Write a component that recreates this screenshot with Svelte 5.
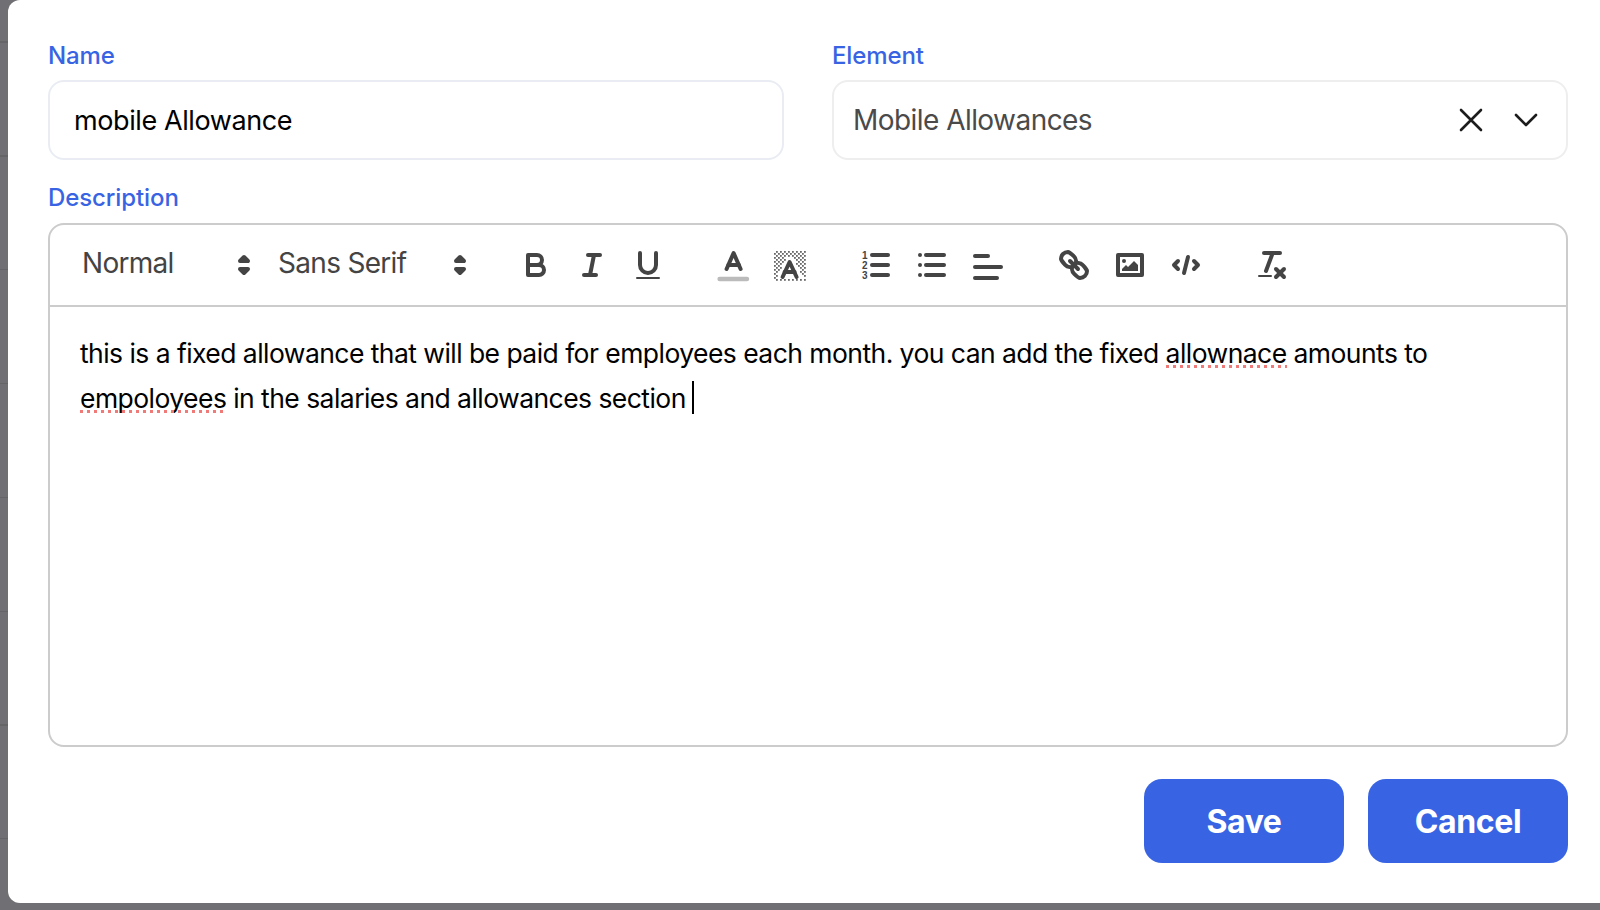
<script lang="ts">
	let name = $state("mobile Allowance");

	// checker cells of the background-colour icon, with a gap left round the A
	const checker: { x: number; y: number }[] = [];
	for (let y = 2; y < 17; y++) {
		for (let x = 1; x < 17; x++) {
			if ((x + y) % 2) continue;
			const halfWidth = (y - 5) * 0.5 + 1.6;
			if (y >= 5 && y <= 15 && Math.abs(x + 0.5 - 9) < halfWidth) continue;
			checker.push({ x, y });
		}
	}
</script>

<div class="page">
	<div class="modal">
		<div class="row">
			<div class="field">
				<label class="label" for="name">Name</label>
				<input id="name" class="input" bind:value={name} />
			</div>
			<div class="field">
				<span class="label">Element</span>
				<div class="select">
					<span class="select-value">Mobile Allowances</span>
					<svg class="clear" viewBox="0 0 24 24"><path d="M2 2l20 20M22 2L2 22" /></svg>
					<svg class="chevron" viewBox="0 0 24 14"><path d="M2 2l10 10L22 2" /></svg>
				</div>
			</div>
		</div>

		<div class="field description">
			<span class="label">Description</span>
			<div class="editor">
				<div class="toolbar">
					<span class="formats">
						<span class="picker header">
							<span class="picker-text">Normal</span>
							<svg class="icon" viewBox="0 0 18 18"><polygon points="7 11 9 13 11 11 7 11" /><polygon points="7 7 9 5 11 7 7 7" /></svg>
						</span>
						<span class="picker font">
							<span class="picker-text">Sans Serif</span>
							<svg class="icon" viewBox="0 0 18 18"><polygon points="7 11 9 13 11 11 7 11" /><polygon points="7 7 9 5 11 7 7 7" /></svg>
						</span>
					</span>
					<span class="formats">
						<button class="tool" aria-label="Bold">
							<svg class="icon" viewBox="0 0 18 18"><path d="M5 4h4.5A2.5 2.5 0 0 1 12 6.5 2.5 2.5 0 0 1 9.5 9H5V4Z" /><path d="M5 9h5.5A2.5 2.5 0 0 1 13 11.5 2.5 2.5 0 0 1 10.5 14H5V9Z" /></svg>
						</button>
						<button class="tool" aria-label="Italic">
							<svg class="icon" viewBox="0 0 18 18"><line x1="7" x2="13" y1="4" y2="4" /><line x1="5" x2="11" y1="14" y2="14" /><line x1="8" x2="10" y1="14" y2="4" /></svg>
						</button>
						<button class="tool" aria-label="Underline">
							<svg class="icon" viewBox="0 0 18 18"><path d="M5 3v6a4 4 0 0 0 4 4 4 4 0 0 0 4-4V3" /><rect class="f" height="1" rx=".5" width="12" x="3" y="15" /></svg>
						</button>
					</span>
					<span class="formats">
						<button class="tool" aria-label="Text colour">
							<svg class="icon" viewBox="0 0 18 18"><line class="swatch" x1="1.8" x2="15.5" y1="16" y2="16" /><polyline points="5.3 11 8.8 3 12.3 11" /><line x1="11.4" x2="6.2" y1="9" y2="9" /></svg>
						</button>
						<button class="tool" aria-label="Background colour">
							<svg class="icon" viewBox="0 0 18 18">
								{#each checker as cell}
									<rect class="f cell" width="0.9" height="0.9" x={cell.x} y={cell.y} />
								{/each}
								<polyline points="5.3 15 8.8 7.5 12.3 15" /><line x1="11.3" x2="6.3" y1="12.5" y2="12.5" />
							</svg>
						</button>
					</span>
					<span class="formats">
						<button class="tool" aria-label="Ordered list">
							<svg class="icon" viewBox="0 0 18 18">
								<line x1="7" x2="15" y1="4" y2="4" /><line x1="7" x2="15" y1="9" y2="9" /><line x1="7" x2="15" y1="14" y2="14" />
								<text class="digit" x="2" y="5.9">1</text><text class="digit" x="2" y="10.9">2</text><text class="digit" x="2" y="15.9">3</text>
							</svg>
						</button>
						<button class="tool" aria-label="Bullet list">
							<svg class="icon" viewBox="0 0 18 18">
								<line x1="6" x2="15" y1="4" y2="4" /><line x1="6" x2="15" y1="9" y2="9" /><line x1="6" x2="15" y1="14" y2="14" />
								<line x1="3" x2="3" y1="4" y2="4" /><line x1="3" x2="3" y1="9" y2="9" /><line x1="3" x2="3" y1="14" y2="14" />
							</svg>
						</button>
						<button class="tool" aria-label="Align">
							<svg class="icon" viewBox="0 0 18 18"><line x1="2.5" x2="9" y1="4.5" y2="4.5" /><line x1="2.5" x2="15.5" y1="10" y2="10" /><line x1="2.5" x2="13.5" y1="15.5" y2="15.5" /></svg>
						</button>
					</span>
					<span class="formats">
						<button class="tool" aria-label="Link">
							<svg class="icon" viewBox="0 0 18 18">
								<line x1="7" x2="11" y1="7" y2="11" />
								<path d="M8.9 4.577a3.476 3.476 0 0 1 .36 4.679A3.476 3.476 0 0 1 4.577 8.9C3.185 7.5 2.5 6.143 2.5 6A3.476 3.476 0 0 1 6 2.5c.143 0 1.5.685 2.9 2.077Z" />
								<path d="M13.423 9.1a3.476 3.476 0 0 0-4.679-.36 3.476 3.476 0 0 0 .36 4.679c1.392 1.392 2.5 2.077 2.896 2.077A3.476 3.476 0 0 0 15.5 12c0-.143-.685-1.5-2.077-2.9Z" />
							</svg>
						</button>
						<button class="tool" aria-label="Image">
							<svg class="icon" viewBox="0 0 18 18"><rect height="10" width="12" x="3" y="4" /><circle class="f" cx="6" cy="7" r="1" /><polyline class="f" points="5 12 5 11 7 9 8 10 11 7 13 9 13 12 5 12" /></svg>
						</button>
						<button class="tool" aria-label="Code">
							<svg class="icon" viewBox="0 0 18 18"><polyline points="5 7 3 9 5 11" /><polyline points="13 7 15 9 13 11" /><line x1="10" x2="8" y1="5" y2="13" /></svg>
						</button>
					</span>
					<span class="formats">
						<button class="tool" aria-label="Clear formatting">
							<svg class="icon" viewBox="0 0 18 18"><line x1="5" x2="13" y1="3" y2="3" /><line x1="6" x2="9.35" y1="12" y2="3" /><line x1="11" x2="15" y1="11" y2="15" /><line x1="15" x2="11" y1="11" y2="15" /><rect class="f" height="1" rx=".5" width="7" x="2" y="14" /></svg>
						</button>
					</span>
				</div>
				<div class="content">
					this is a fixed allowance that will be paid for employees each month. you can add the fixed <span class="misspelt">allownace</span> amounts to <span class="misspelt">empoloyees</span> in the salaries and allowances section<span class="caret"></span>
				</div>
			</div>
		</div>

		<div class="actions">
			<button class="btn">Save</button>
			<button class="btn">Cancel</button>
		</div>
	</div>
</div>

<style>
	:global(body) {
		margin: 0;
		font-family: Inter, "Noto Sans", sans-serif;
	}

	.page {
		box-sizing: border-box;
		height: 910px;
		padding: 0 0 7px 8px;
		overflow: hidden;
		background: repeating-linear-gradient(
			to bottom,
			#707074 0,
			#707074 112.5px,
			#656568 112.5px,
			#656568 113.8px
		);
		background-position: 0 -71px;
	}

	.modal {
		box-sizing: border-box;
		display: flex;
		flex-direction: column;
		height: 903px;
		padding: 41px 32px 40px 40px;
		border-radius: 12px 0 0 12px;
		background: #fff;
	}

	.row {
		display: grid;
		grid-template-columns: 1fr 1fr;
		gap: 48px;
	}

	.field {
		display: flex;
		flex-direction: column;
		gap: 9px;
		min-width: 0;
	}

	.label {
		color: #3864e4;
		font-size: 24px;
		font-weight: 500;
		line-height: 30px;
		letter-spacing: -0.1px;
	}

	.input,
	.select {
		box-sizing: border-box;
		width: 100%;
		height: 80px;
		border: 2px solid #e9edf3;
		border-radius: 16px;
		background: #fff;
		font-family: inherit;
	}

	.input {
		padding: 0 24px;
		color: #000;
		font-size: 27px;
		letter-spacing: -0.4px;
		outline: none;
	}

	.select {
		display: flex;
		align-items: center;
		padding: 0 28px 0 19px;
		border-color: #eeeeee;
		color: #4a4a4a;
		font-size: 28px;
		letter-spacing: -0.55px;
	}

	.select-value {
		flex: 1;
	}

	.clear,
	.chevron {
		fill: none;
		stroke: #1c1c1c;
		stroke-width: 2.6;
		stroke-linecap: round;
		stroke-linejoin: round;
	}

	.clear {
		width: 24px;
		height: 24px;
		margin-right: 31px;
	}

	.chevron {
		width: 24px;
		height: 14px;
	}

	.description {
		margin-top: 23px;
		gap: 10px;
	}

	.editor {
		box-sizing: border-box;
		height: 524px;
		border: 2px solid #ccc;
		border-radius: 16px;
	}

	.toolbar {
		display: flex;
		padding: 16px;
		border-bottom: 2px solid #ccc;
	}

	.formats {
		display: flex;
		margin-right: 30px;
	}

	.picker {
		display: flex;
		align-items: center;
		justify-content: space-between;
		box-sizing: border-box;
		height: 48px;
		padding-left: 16px;
		color: #444;
		font-size: 28px;
		letter-spacing: -0.7px;
	}

	.picker-text {
		padding-bottom: 5px;
	}

	.picker.header {
		width: 196px;
	}

	.picker.font {
		width: 216px;
	}

	.tool {
		box-sizing: border-box;
		width: 56px;
		height: 48px;
		padding: 6px 10px;
		border: 0;
		background: none;
	}

	.icon {
		display: block;
		flex: none;
		width: 36px;
		height: 36px;
		fill: none;
		stroke: #444;
		stroke-width: 2;
		stroke-linecap: round;
		stroke-linejoin: round;
	}

	.icon .f {
		fill: #444;
		stroke: none;
	}

	.icon .cell {
		opacity: 0.8;
	}

	.icon .swatch {
		stroke: #bbb;
		stroke-width: 2.2;
	}

	.digit {
		fill: #444;
		stroke: none;
		font-size: 5px;
		font-weight: 800;
	}

	.content {
		padding: 24px 30px;
		color: #000;
		font-size: 26.5px;
		line-height: 45px;
		letter-spacing: -0.55px;
	}

	.misspelt {
		position: relative;
	}

	.misspelt::after {
		content: "";
		position: absolute;
		left: 0;
		right: 0;
		bottom: 1px;
		height: 3px;
		background: radial-gradient(circle at 1.5px 1.5px, #f07a78 1.5px, transparent 1.7px) repeat-x;
		background-size: 7px 3px;
	}

	.caret {
		display: inline-block;
		width: 2px;
		height: 33px;
		margin-left: 6px;
		background: #000;
		vertical-align: -6px;
	}

	.actions {
		display: flex;
		justify-content: flex-end;
		gap: 24px;
		margin-top: 32px;
	}

	.btn {
		width: 200px;
		height: 84px;
		border: 0;
		border-radius: 18px;
		background: #3864e4;
		color: #fff;
		font-family: inherit;
		font-size: 32px;
		font-weight: 700;
		letter-spacing: -0.4px;
	}
</style>
